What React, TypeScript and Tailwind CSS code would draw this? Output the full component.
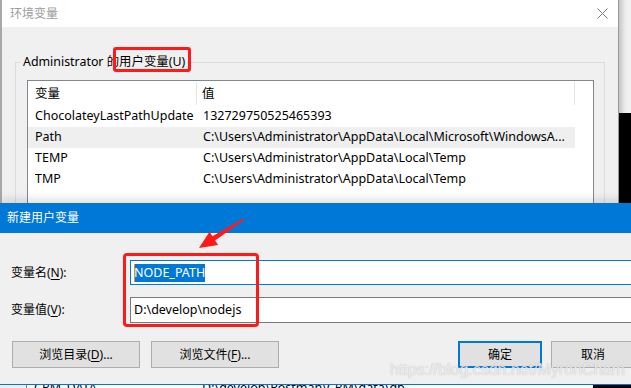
import React from "react";

const rows = [
  { name: "ChocolateyLastPathUpdate", value: "132729750525465393", active: false },
  { name: "Path", value: "C:\\Users\\Administrator\\AppData\\Local\\Microsoft\\WindowsA...", active: true },
  { name: "TEMP", value: "C:\\Users\\Administrator\\AppData\\Local\\Temp", active: false },
  { name: "TMP", value: "C:\\Users\\Administrator\\AppData\\Local\\Temp", active: false },
];

function CloseIcon() {
  return (
    <svg width="11" height="11" viewBox="0 0 11 11" className="text-[#7a7a7a]">
      <path d="M0.5 0.5 L10.5 10.5 M10.5 0.5 L0.5 10.5" stroke="currentColor" strokeWidth="1" fill="none" />
    </svg>
  );
}

function WinButton({ children, primary }: { children: React.ReactNode; primary?: boolean }) {
  return (
    <button
      type="button"
      className={`flex h-[27px] w-full items-center justify-center bg-[#e1e1e1] text-black ${
        primary ? "border-2 border-[#0078d7]" : "border border-[#adadad]"
      }`}
    >
      {children}
    </button>
  );
}

function EnvWindow() {
  return (
    <div className="flex h-[203px]">
      <div className="w-[2px] bg-[#a8a8a8]" />
      <div className="flex w-[617px] flex-col border-r border-[#9a9a9a] bg-[#f0f0f0]">
        <div className="flex h-[27px] items-center justify-between bg-white pl-[8px] pr-[10px]">
          <span className="text-[#9c9c9c]">环境变量</span>
          <CloseIcon />
        </div>
        <div className="flex-1 overflow-hidden px-[13px] pt-[26px]">
          <fieldset className="h-[200px] border border-[#dcdcdc] pl-[11px] pr-[10px] pt-[9px]">
            <legend className="-ml-[6px] px-[2px] text-[12.4px] leading-[18px] text-black">Administrator 的用户变量(U)</legend>
            <div className="h-full border border-[#828790] bg-white text-[12.5px]">
              <div className="flex h-[25px]">
                <div className="my-[1px] w-[169px] border-r border-[#e5e5e5] pl-[7px] leading-[23px]">变量</div>
                <div className="my-[1px] w-[378px] border-r border-[#e5e5e5] pl-[5px] leading-[23px]">值</div>
              </div>
              {rows.map((r) => (
                <div
                  key={r.name}
                  className={`flex h-[21px] w-[547px] items-center whitespace-nowrap ${r.active ? "bg-[#efefef]" : ""}`}
                >
                  <div className="w-[170px] pl-[7px]">{r.name}</div>
                  <div className="flex-1 overflow-hidden pl-[5px]">{r.value}</div>
                </div>
              ))}
            </div>
          </fieldset>
        </div>
      </div>
      <div className="flex flex-1 flex-col">
        <div className="h-[113px] bg-gradient-to-r from-[#c4c4c4] via-[#ececec] to-[#f4f4f4]" />
        <div className="flex-1 bg-black" />
      </div>
    </div>
  );
}

function NewVarDialog() {
  return (
    <div className="relative w-[646px] border-b border-[#0078d7] bg-[#f0f0f0] shadow-[0_-4px_8px_rgba(0,0,0,0.12)]">
      <div className="flex h-[30px] items-center bg-[#0078d7] pl-[7px] text-white">新建用户变量</div>
      <div className="px-[11px] pb-[16px] pt-[27px]">
        <div className="flex h-[25px] items-center">
          <label className="w-[119px]">
            变量名(<u className="underline-offset-2">N</u>):
          </label>
          <div className="flex h-[25px] flex-1 items-center border border-[#0078d7] bg-white pl-[3px] text-[12.5px]">
            <span className="relative bg-[#0078d7] leading-[18px] text-white">
              <span className="absolute left-0 top-0 h-[18px] w-[1px] bg-[#f08a24]" />
              NODE_PATH
            </span>
          </div>
        </div>
        <div className="mt-[12px] flex h-[26px] items-center">
          <label className="w-[119px]">
            变量值(<u className="underline-offset-2">V</u>):
          </label>
          <div className="flex h-[26px] flex-1 items-center border border-[#7a7a7a] bg-white pl-[3px] text-[12.5px]">
            D:\develop\nodejs
          </div>
        </div>
        <div className="mt-[18px] flex items-center pl-[1px]">
          <div className="flex gap-[11px]">
            <div className="w-[128px]">
              <WinButton>
                浏览目录(<u className="underline-offset-2">D</u>)...
              </WinButton>
            </div>
            <div className="w-[128px]">
              <WinButton>
                浏览文件(<u className="underline-offset-2">F</u>)...
              </WinButton>
            </div>
          </div>
          <div className="ml-auto flex gap-[9px]">
            <div className="w-[84px]">
              <WinButton primary>确定</WinButton>
            </div>
            <div className="w-[84px]">
              <WinButton>取消</WinButton>
            </div>
          </div>
        </div>
      </div>
    </div>
  );
}

function BottomStrip() {
  return (
    <div className="flex h-[3px] overflow-hidden">
      <div className="w-[27px] border-r border-[#828790] bg-[#f0f0f0]" />
      <div className="flex w-[566px] whitespace-nowrap bg-white text-[12.5px]">
        <div className="-mt-[6px] w-[169px] pl-[7px]">CRM_DATA</div>
        <div className="-mt-[6px] pl-[6px]">D:\develop\Postman\CRM\data\db</div>
      </div>
      <div className="flex-1 bg-black" />
    </div>
  );
}

export default function App() {
  return (
    <div className="relative h-[388px] w-[631px] overflow-hidden bg-[#f0f0f0] font-['Noto_Sans','Noto_Sans_CJK_SC',sans-serif] text-[12px] text-black">
      <EnvWindow />
      <NewVarDialog />
      <BottomStrip />

      {/* annotations */}
      <div className="absolute left-[113px] top-[47px] h-[25px] w-[78px] rounded-[3px] border-[3px] border-[#ff1a1a]" />
      <div className="absolute left-[123px] top-[253px] h-[74px] w-[136px] rounded-[4px] border-[3px] border-[#ff1a1a]" />
      <svg className="absolute left-0 top-0" width="631" height="388" viewBox="0 0 631 388">
        <polygon
          points="244.4,219.7 215.1,240.5 218.1,245.1 199,248 209.5,231.7 212.5,236.3 243.6,218.3"
          fill="#ff1a1a"
        />
      </svg>
      <div className="absolute left-[390px] top-[361px] whitespace-nowrap font-['Liberation_Sans',sans-serif] text-[16px] leading-[18px] text-white/80 [text-shadow:0_0_1px_rgba(0,0,0,0.35)]">
        https://blog.csdn.net/MyronCham
      </div>
    </div>
  );
}
